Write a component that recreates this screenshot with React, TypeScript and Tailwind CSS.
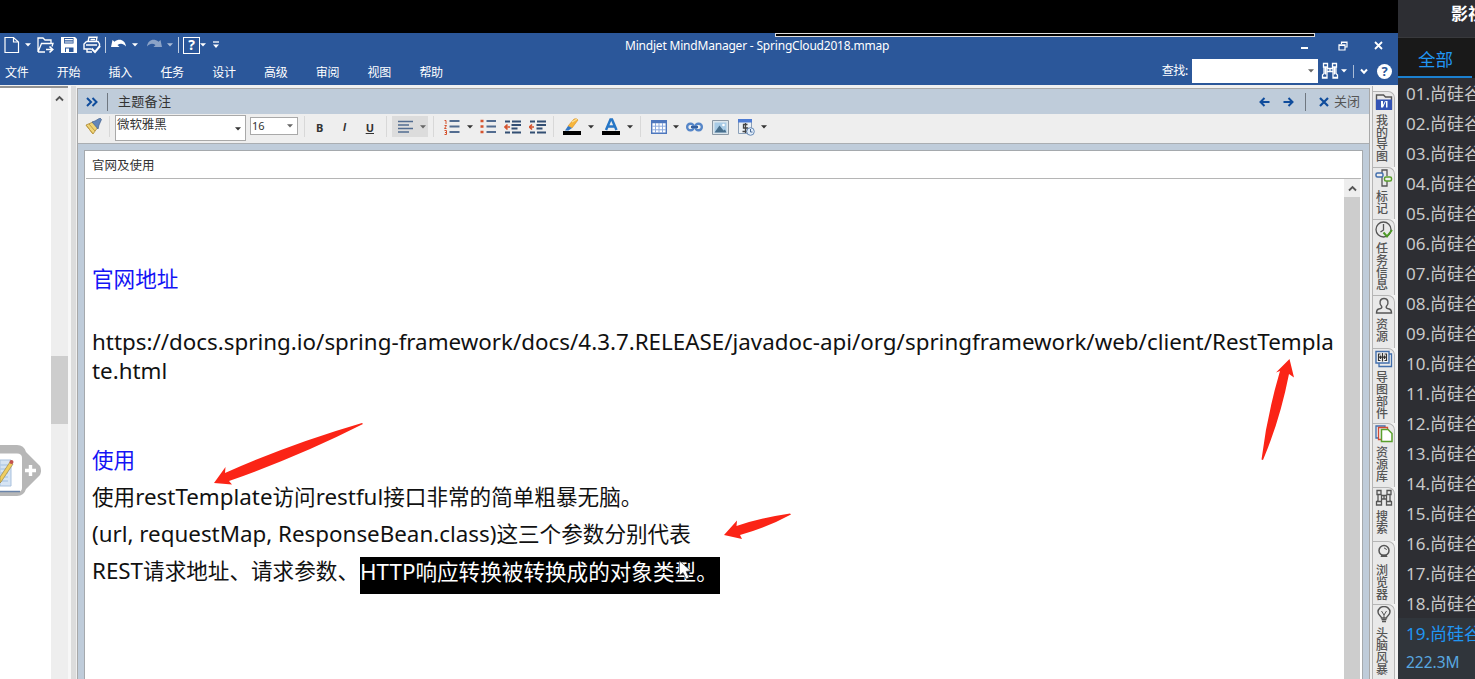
import type { ReactNode } from "react";

const uiFont = "font-['Noto_Sans','Noto_Sans_CJK_SC',sans-serif]";

function Caret({ className = "text-[#666]" }: { className?: string }) {
  return (
    <svg className={`shrink-0 ${className}`} width="6" height="4" viewBox="0 0 6 4">
      <path d="M0 0.3H6L3 3.6Z" fill="currentColor" />
    </svg>
  );
}

function Icon({ w = 18, h = 18, className = "", children }: { w?: number; h?: number; className?: string; children: ReactNode }) {
  return (
    <svg className={`shrink-0 ${className}`} width={w} height={h} viewBox={`0 0 ${w} ${h}`} fill="none">
      {children}
    </svg>
  );
}

function Binoculars({ className = "" }: { className?: string }) {
  return (
    <Icon w={18} h={18} className={className}>
      <path
        d="M2.500 1.500h4v3.500h-4zM11.500 1.500h4v3.500h-4zM3 5v6.500L1.500 13v3h4.500V5M15 5v6.500l1.500 1.500v3H12V5M1 15.500h5M12 15.500h5M6 6.500h6M6 9.500h6M9 6.500v3M4.500 5.500v7M13.500 5.500v7"
        stroke="currentColor"
        strokeWidth="1.3"
      />
    </Icon>
  );
}

function TitleBar() {
  return (
    <div className="flex h-[25px] items-center text-white">
      <div className="flex h-full w-[240px] shrink-0 items-center pb-px pl-[4px]">
        <Icon w={16} h={18}>
          <path d="M1 1.500h8.500L14.500 6v10.500H1zM9.500 1.500V6h5" stroke="white" strokeWidth="1.200" />
        </Icon>
        <Caret className="ml-[5px] text-white" />
        <Icon w={18} h={18} className="ml-[6px]">
          <path d="M1 16V2h5l2 2h6v3M1 16L4.500 7.500H16l-1 3M1 16h7" stroke="white" strokeWidth="1.300" />
          <path d="M9 13.500h6.500M12.500 10.500l3.200 3-3.200 3" stroke="white" strokeWidth="1.700" />
        </Icon>
        <Icon w={18} h={18} className="ml-[5px]">
          <path d="M1 1h14l2 2v14H1z" fill="white" />
          <path d="M4 2h9.500v5.500H4zM5 11.500h8.500V16H5z" fill="#2b579a" />
          <path d="M4.800 3h8v1.200h-8zM4.800 5.500h8v1h-8zM6 12.500h3V16H6z" fill="white" />
        </Icon>
        <Icon w={18} h={18} className="ml-[5px]">
          <path d="M5 6L6 1.200h8L13 6M3.500 5.500H15l1.500 2.500v3M3.500 5.500L1 8v5h7M3 9h11M4 13v3h5M7.500 3.500H12" stroke="white" strokeWidth="1.400" />
          <path d="M8.500 12.500l3.500 3.500 5-6" stroke="white" strokeWidth="2" />
        </Icon>
        <div className="ml-[4px] h-[16px] w-px bg-white/70" />
        <Icon w={16} h={12} className="ml-[5px]">
          <path d="M0 8L1.500 1l2 1.800C8-.8 14 .5 15 7.500 12 4 9 4.300 6.500 6L8.500 8z" fill="white" />
        </Icon>
        <Caret className="ml-[5px] text-white" />
        <Icon w={16} h={12} className="ml-[8px] opacity-45">
          <path d="M16 8L14.500 1l-2 1.800C8-.8 2 .5 1 7.500 4 4 7 4.300 9.500 6L7.500 8z" fill="white" />
        </Icon>
        <Caret className="ml-[5px] text-white/60" />
        <div className="ml-[5px] h-[16px] w-px bg-white/70" />
        <div className="ml-[4px] flex h-[17px] w-[17px] shrink-0 items-center justify-center border border-white text-[14px] leading-none font-bold">?</div>
        <Caret className="text-white" />
        <Icon w={6} h={8} className="ml-[7px]">
          <path d="M0 1h6" stroke="white" strokeWidth="1.300" />
          <path d="M0 3.500h6L3 7z" fill="white" />
        </Icon>
      </div>
      <div className="flex-1 pl-[385px] text-[12px] tracking-[-0.2px] whitespace-nowrap">Mindjet MindManager - SpringCloud2018.mmap</div>
      <div className="flex shrink-0 items-center pr-[15px]">
        <div className="mt-[5px] h-[2px] w-[7px] bg-white" />
        <Icon w={10} h={10} className="ml-[30px]">
          <path d="M3.500 3V1H9v5H7M1 3.800h6V9H1zM1 4.500h6M3.500 1.500H9" stroke="white" strokeWidth="1.200" />
        </Icon>
        <Icon w={9} h={9} className="ml-[26px]">
          <path d="M1 1l7 7M8 1L1 8" stroke="white" strokeWidth="1.800" />
        </Icon>
      </div>
    </div>
  );
}

function MenuBar() {
  const items = ["文件", "开始", "插入", "任务", "设计", "高级", "审阅", "视图", "帮助"];
  return (
    <div className="flex h-[26px] items-center text-[12px] tracking-[-0.3px] text-white">
      <div className="flex pt-[3px] pl-[5px]">
        {items.map((t) => (
          <div key={t} className="w-[51.8px] leading-[26px]">{t}</div>
        ))}
      </div>
      <div className="ml-auto flex items-center">
        <span className="mr-[4px]">查找:</span>
        <div className="flex h-[24px] w-[126px] items-center justify-end bg-white pr-[4px]"><Caret /></div>
        <Binoculars className="ml-[3px]" />
        <Caret className="ml-[2px] text-white" />
        <div className="ml-[6px] h-[13px] w-px bg-white/60" />
        <Icon w={8} h={7} className="ml-[6px]"><path d="M1 1.500l3 3.200 3-3.200" stroke="white" strokeWidth="2" /></Icon>
        <div className="mr-[6px] ml-[9px] flex h-[15px] w-[15px] items-center justify-center rounded-full bg-white text-[13px] leading-none font-bold text-[#2b579a]">?</div>
      </div>
    </div>
  );
}

function MapCanvas() {
  return (
    <div className="flex w-[77px] shrink-0">
      <div className="flex w-[51px] flex-col border-t-2 border-[#929292] bg-white">
        <div className="mt-[357px] flex h-[52px] items-center">
          <svg width="42" height="52" viewBox="0 0 42 52" className="shrink-0">
            <path d="M0 0H17Q24 0 26 7L40 21Q42 25.500 40 30L26 44Q24 51 17 51H0z" fill="#b7b7b7" />
            <path d="M0 8.500H17Q22 8.500 22 13V43Q22 47 17 47H0z" fill="white" />
            <path d="M0 46.500h20" stroke="#6a84aa" strokeWidth="1.500" />
            <path d="M0 15h11v26H0z" fill="#d6e4f3" stroke="#a9c1dd" />
            <path d="M0 20h8M0 24h8M0 28h8M0 32h8M0 36h8" stroke="#b4cce8" strokeWidth="1.600" />
            <path d="M0 32L10 17l3 2L1 37l-1 1z" fill="#f0ce60" stroke="#9b8644" strokeWidth=".7" />
            <circle cx="11.500" cy="17" r="2" fill="#c3524e" />
            <path d="M25 25.500h11M30.500 20v11" stroke="white" strokeWidth="3.400" />
          </svg>
        </div>
      </div>
      <div className="flex w-[17px] flex-col border-t-2 border-[#929292] bg-[#eeeeee]">
        <Icon w={9} h={7} className="mt-[7px] ml-[4px]"><path d="M1 5.500L4.500 2 8 5.500" stroke="#555" strokeWidth="1.800" /></Icon>
        <div className="mt-[254px] h-[68px] bg-[#cdcdcd]" />
      </div>
      <div className="w-[3px] bg-[#f7f7f7]" />
      <div className="w-[5px] bg-[#dcdcdc]" />
      <div className="w-px bg-[#f0f0f0]" />
    </div>
  );
}

function NotesHeader() {
  return (
    <div className="flex h-[25px] shrink-0 items-center bg-[#bfccda] text-[12px] text-[#333]">
      <Icon w={12} h={10} className="ml-[8px]"><path d="M1 1l4 4-4 4M6.500 1l4 4-4 4" stroke="#0f4c9c" strokeWidth="2" /></Icon>
      <div className="ml-[9px] h-[18px] w-px bg-[#6f7780]" />
      <div className="ml-[10px] text-[13px] tracking-[0.3px]">主题备注</div>
      <div className="ml-auto flex items-center pr-[9px]">
        <Icon w={11} h={10}><path d="M10.500 5H1.500M5.500 1L1.500 5l4 4" stroke="#0f4c9c" strokeWidth="2" /></Icon>
        <Icon w={11} h={10} className="ml-[13px]"><path d="M.5 5h9M5.500 1l4 4-4 4" stroke="#0f4c9c" strokeWidth="2" /></Icon>
        <div className="ml-[11px] h-[18px] w-px bg-[#6f7780]" />
        <Icon w={10} h={10} className="ml-[13px]"><path d="M1 1l8 8M9 1L1 9" stroke="#0f4c9c" strokeWidth="2.200" /></Icon>
        <div className="ml-[5px] text-[13px] text-[#555]">关闭</div>
      </div>
    </div>
  );
}

function Sep({ className = "" }: { className?: string }) {
  return <div className={`h-[21px] w-px shrink-0 bg-[#d8d8d8] ${className}`} />;
}

function Indent({ out = false }: { out?: boolean }) {
  return (
    <Icon w={17} h={15}>
      <path d="M1 1.500h5M8 1.500h9M7.500 5h9.500M7.500 8.500h6M1 12.500h5M8 12.500h9" stroke="#334f73" strokeWidth="2" />
      {out ? <path d="M6 7H1M3.500 4.500L1 7l2.500 2.500" stroke="#d5532e" strokeWidth="1.700" /> : <path d="M0 7h5M3 4.500L.5 7 3 9.500" stroke="#d5532e" strokeWidth="1.700" />}
    </Icon>
  );
}

function FormatToolbar() {
  return (
    <div className="flex h-[30px] shrink-0 items-start border-b border-[#aaaeb2] bg-[#eeeeee] text-[#333]">
      <Icon w={17} h={17} className="mt-[4px] ml-[7px]">
        <path d="M1 7L8 4l5 5-5 7z" fill="#efd477" stroke="#a9883c" strokeWidth=".8" />
        <path d="M1 7l7 9M4 6l6 7" stroke="#c29c3d" />
        <path d="M7 4l3-1 5-3 1.500 1.500L14 7l-1 4z" fill="#6386b8" stroke="#45638e" strokeWidth=".7" />
      </Icon>
      <Sep className="mt-[2px] ml-[7px]" />
      <div className="mt-px ml-[5px] flex h-[26px] w-[131px] justify-between border border-[#a9a9a9] bg-white pr-[4px] pl-[1px]">
        <span className="text-[12.500px] leading-[17px] tracking-[-0.1px]">微软雅黑</span>
        <Caret className="mt-[11px]" />
      </div>
      <div className="mt-[3px] ml-[4px] flex h-[18px] w-[48px] items-center justify-between border border-[#a9a9a9] bg-white pr-[4px] pl-[1px] text-[11px] leading-[16px]">
        16<Caret />
      </div>
      <Sep className="mt-[2px] ml-[6px]" />
      <div className="mt-[3px] ml-[11px] flex h-[21px] w-[58px] items-center justify-between text-[11px] leading-none font-bold">
        <span>B</span><span className="font-['Liberation_Sans',sans-serif] italic">I</span><span className="underline">U</span>
      </div>
      <Sep className="mt-[2px] ml-[12px]" />
      <div className="mt-[2px] ml-[5px] flex h-[21px] w-[36px] items-center justify-between bg-[#dcdcdc] pr-[2px] pl-[6px]">
        <Icon w={16} h={13}><path d="M0 1.500h15M0 5h11M0 8.500h15M0 12h11" stroke="#526c90" strokeWidth="1.600" /></Icon>
        <Caret />
      </div>
      <Sep className="mt-[2px] ml-[5px]" />
      <div className="mt-[4px] ml-[10px] flex h-[18px] items-center">
        <Icon w={16} h={16}>
          <path d="M5.500 2h10M5.500 7.500h10M5.500 13h10" stroke="#526c90" strokeWidth="1.800" />
          <path d="M.5 1.500h1.500V5M.5 6.500h2L.5 9.500h2M.5 11.500h2v4h-2M1 13.500h1.500" stroke="#d5532e" />
        </Icon>
        <Caret className="ml-[7px]" />
        <Icon w={17} h={16} className="ml-[7px]">
          <path d="M6.500 2H16M6.500 7.500H16M6.500 13H16" stroke="#526c90" strokeWidth="1.800" />
          <path d="M.5 .8h3v2.500h-3zM.5 6.200h3v2.500h-3zM.5 11.800h3v2.500h-3z" fill="#d5532e" />
        </Icon>
        <div className="ml-[7px] flex gap-[8px]"><Indent out /><Indent /></div>
      </div>
      <Sep className="mt-[2px] ml-[7px]" />
      <div className="mt-[3px] ml-[9px] flex h-[19px] items-center">
        <Icon w={18} h={18}>
          <path d="M5 8l6-7q3-1 4 1L9 10z" fill="#f7b63b" stroke="#d68d22" strokeWidth=".6" />
          <path d="M2 12.500L5 8l4 2-3.500 2.500z" fill="#3477c3" />
          <path d="M9 4l5-3" stroke="#fce095" strokeWidth="1.300" />
          <path d="M0 13h18v4H0z" fill="#000" />
        </Icon>
        <Caret className="ml-[7px]" />
        <Icon w={18} h={18} className="ml-[8px]">
          <path d="M4 12L8.500 1.500h1.500L14.500 12M6 8.500h7" stroke="#2676c6" strokeWidth="2.500" />
          <path d="M0 13h18v4H0z" fill="#000" />
        </Icon>
        <Caret className="ml-[7px]" />
      </div>
      <Sep className="mt-[2px] ml-[7px]" />
      <div className="mt-[4px] ml-[10px] flex h-[18px] items-center">
        <Icon w={16} h={14}>
          <path d="M.7.7h14.600v12.600H.7z" fill="white" stroke="#4d77bd" strokeWidth="1.400" />
          <path d="M1 2h14" stroke="#4d77bd" strokeWidth="2.500" />
          <path d="M1 6.200h14M1 9.800h14M4.500 3v10M8 3v10M11.500 3v10" stroke="#8eabde" />
        </Icon>
        <Caret className="ml-[6px]" />
        <Icon w={17} h={10} className="ml-[7px]">
          <rect x="1.200" y="1.700" width="6.500" height="6.500" rx="3" stroke="#5686c8" strokeWidth="2.400" />
          <rect x="9.300" y="1.700" width="6.500" height="6.500" rx="3" stroke="#5686c8" strokeWidth="2.400" />
          <path d="M5 5h7" stroke="#355f9e" strokeWidth="2" />
        </Icon>
        <Icon w={17} h={15} className="ml-[9px]">
          <path d="M.5.5h16v14H.5z" fill="#dce6ec" stroke="#8b98a5" />
          <path d="M2.500 2.500h12v10h-12z" fill="#a8cbe6" />
          <path d="M2.500 12.500l5-7 4 5 1.500-1 1.500 3z" fill="#486f8d" />
          <circle cx="11.500" cy="5" r="1.300" fill="white" />
        </Icon>
        <Icon w={17} h={17} className="ml-[9px]">
          <path d="M.5.5h13v14H.5z" fill="#edf1f5" stroke="#8ba0b9" />
          <path d="M0 0h14v3.500H0z" fill="#4d7bd3" />
          <path d="M9.500 5.500H5.500v3.500h4v3.500h-5M7.500 4v10" stroke="#444" strokeWidth="1.300" />
          <circle cx="12.500" cy="12.500" r="3.800" fill="#e2edf9" stroke="#6688b5" />
          <path d="M12.500 10v3h2" stroke="#486b99" />
        </Icon>
        <Caret className="ml-[6px]" />
      </div>
    </div>
  );
}

function Latin({ children }: { children: ReactNode }) {
  return <span className="text-[22.36px]">{children}</span>;
}

function NoteBody() {
  return (
    <div className="flex min-h-0 flex-1">
      <div className="flex-1 pl-[7px] text-[21.600px] whitespace-nowrap text-[#111]">
        <div className="mt-[85px] h-[30px] leading-[30px] text-[#1414f5]">官网地址</div>
        <div className="mt-[33px] h-[29px] leading-[29px]"><Latin>https://docs.spring.io/spring-framework/docs/4.3.7.RELEASE/javadoc-api/org/springframework/web/client/RestTempla</Latin></div>
        <div className="h-[29px] leading-[29px]"><Latin>te.html</Latin></div>
        <div className="mt-[56px] h-[37px] leading-[37px] text-[#1414f5]">使用</div>
        <div className="h-[37px] leading-[37px]">使用<Latin>restTemplate</Latin>访问<Latin>restful</Latin>接口非常的简单粗暴无脑。</div>
        <div className="h-[37px] leading-[37px]"><Latin>(url, requestMap, ResponseBean.class)</Latin>这三个参数分别代表</div>
        <div className="flex h-[42px] leading-[38px]">
          <span className="w-[268px]"><Latin>REST</Latin>请求地址、请求参数、</span>
          <span className="mt-[5px] h-[37px] w-[360px] bg-black leading-[29px] text-white"><Latin>HTTP</Latin>响应转换被转换成的对象类型。</span>
        </div>
      </div>
      <div className="mr-[2px] flex w-[16px] flex-col bg-[#cdcdcd]">
        <div className="flex h-[18px] items-center justify-center bg-[#eeeeee]">
          <Icon w={9} h={7}><path d="M1 5.500L4.500 2 8 5.500" stroke="#555" strokeWidth="1.800" /></Icon>
        </div>
      </div>
    </div>
  );
}

const g = "#555555";
const tabs: { label: string; box: string; text: string; icon: ReactNode }[] = [
  { label: "我的导图", box: "h-[76px]", text: "h-[48px]", icon: <><path d="M1.500 16V2h7l2 2h6v12z" stroke={g} strokeWidth="1.400" /><path d="M1 6.500h16V17H1z" fill="#3453b4" /><path d="M6 8v6.500h2L11 8v6.500h1.500V8H10l-2 4V8z" fill="white" /></> },
  { label: "标记", box: "h-[52px]", text: "h-[24px]", icon: <><path d="M7 4.500V1h5v6M7 8v9h5v-5" stroke={g} strokeWidth="1.300" /><rect x="1" y="4" width="7" height="4" rx="1.500" fill="#eee" stroke="#416eac" strokeWidth="1.500" /><rect x="9.500" y="8" width="7" height="4" rx="1.500" fill="#eee" stroke="#5aa02c" strokeWidth="1.500" /></> },
  { label: "任务信息", box: "h-[76px]", text: "h-[48px]", icon: <><circle cx="8.500" cy="8.500" r="7.500" stroke={g} strokeWidth="1.300" /><path d="M8.500 3v6l-3 2" stroke={g} strokeWidth="1.300" /><path d="M8.500 11.500l3.500 4L17 9" stroke="#4c9a25" strokeWidth="2" /></> },
  { label: "资源", box: "h-[53px]", text: "h-[24px]", icon: <path d="M6.700 9.500C3.500 6 5 1.500 9 1.500s5.500 4.500 2.300 8c-.6 1.500.7 2 3 2.500 2 .5 2.200 2 2.200 4h-15c0-2 .2-3.500 2.200-4 2.300-.5 3.600-1 3-2.500z" stroke={g} strokeWidth="1.400" /> },
  { label: "导图部件", box: "h-[75px]", text: "h-[48px]", icon: <><path d="M4 13v3.500h12.500V4H14" stroke="#416eac" strokeWidth="1.300" /><path d="M1 1.500h13V13H1z" fill="#f5f5f5" stroke="#416eac" strokeWidth="1.400" /><path d="M5.500 4H3.500v6.500h2M9.500 4h2v6.500h-2M3.500 7.200h8M5.500 5.500v3.500M9.500 5.500v3.500M7.500 3v8.500" stroke="#333" strokeWidth="1.200" /></> },
  { label: "资源库", box: "h-[64px]", text: "h-[36px]", icon: <><path d="M1 1h9v12H1z" fill="#eee" stroke="#416eac" strokeWidth="1.300" /><path d="M3.500 2.500h9v12h-9z" fill="#eee" stroke="#d34b35" strokeWidth="1.300" /><path d="M6.500 4.500h6.500l4 4v8H6.500z" fill="white" stroke="#5aa02c" strokeWidth="1.500" /></> },
  { label: "搜索", box: "h-[54px]", text: "h-[24px]", icon: <path d="M2 1.500h4v4H2zM12 1.500h4v4h-4zM3 5.500v6l-1.500 1V16h5V5.500M15 5.500v6l1.500 1V16h-5V5.500M1.500 12.500h5M11.500 12.500h5M6.500 6.500h5M6.500 10h5M9 6.500V10" stroke={g} strokeWidth="1.300" /> },
  { label: "浏览器", box: "h-[63px]", text: "h-[36px]", icon: <><circle cx="9" cy="7.500" r="5" stroke={g} strokeWidth="1.500" /><path d="M9 5q2 0 2.500 2" stroke={g} /><path d="M6.500 11.500h5l1 2.500h-7z" fill={g} /></> },
  { label: "头脑风暴", box: "h-[76px]", text: "h-[48px]", icon: <><path d="M6.500 12C6.500 10 3 9 3 6a6 5.500 0 0112 0c0 3-3.500 4-3.500 6z" stroke={g} strokeWidth="1.400" /><path d="M6.500 5L9 9l2.500-4M9 9v3" stroke={g} /><path d="M6.500 13.500h5M7 15.500h4" stroke={g} strokeWidth="1.500" /></> },
];

function SideTabs() {
  return (
    <div className="ml-[2px] flex w-[26px] shrink-0 flex-col border-l border-[#b5b5b5] bg-[#f2f2f2] pt-[5px]">
      {tabs.map((t) => (
        <div key={t.label} className={`flex w-[22px] shrink-0 flex-col items-center rounded-tr-[7px] border-t border-r border-[#b5b5b5] bg-[#e9e9e9] pt-px ${t.box}`}>
          <Icon>{t.icon}</Icon>
          <div className={`mt-[4px] mr-[3px] flex w-[12px] flex-col text-[12px] leading-[12px] font-medium text-[#555] ${t.text}`}>
            {t.label.split("").map((c) => <span key={c}>{c}</span>)}
          </div>
        </div>
      ))}
    </div>
  );
}

function Playlist() {
  const rows = Array.from({ length: 18 }, (_, i) => String(i + 1).padStart(2, "0"));
  return (
    <div className="flex w-[77px] shrink-0 flex-col overflow-hidden bg-[#2d2e33] whitespace-nowrap text-[#c9c9c9]">
      <div className="h-[38px] shrink-0 border-b border-[#38393c] pl-[53px] text-[17px] leading-[27px] font-bold text-white">影视</div>
      <div className="flex h-[40px] shrink-0 bg-[#191919]">
        <div className="w-[74px] border-b-2 border-[#1b80cf] pl-[20px] text-[17.500px] leading-[42px] text-[#2196f3]">全部</div>
      </div>
      <div className="flex flex-col text-[17px]">
        {rows.map((n) => <div key={n} className="h-[30px] pl-[8px] leading-[31px]">{n}.尚硅谷</div>)}
      </div>
      <div className="flex-1 bg-[#30353b] pl-[8px] text-[#2196f3]">
        <div className="h-[30px] text-[17px] leading-[31px]">19.尚硅谷</div>
        <div className="text-[15.500px] leading-[28px] text-[#58a8e0]">222.3M</div>
      </div>
    </div>
  );
}

function Annotations() {
  return (
    <svg className="pointer-events-none absolute inset-0" width="1475" height="679" viewBox="0 0 1475 679">
      <g fill="#fb2416">
        <path d="M214 483L225.500 467 225 473Q290 444 362 423L363 424Q300 456 229 481L232 484.500Z" />
        <path d="M724 535L737 520.500 736.500 526Q760 518 790 513.500L791 514.500Q766 528 740 535L742 539Z" />
        <path d="M1289.500 359L1294 377.500 1289 374Q1280 420 1263 460L1261.500 459.500Q1267 415 1280 371L1276 372.500Z" />
      </g>
      <path d="M679.500 561v14.500l3.600-3 2.900 6.500 3-1.300-2.800-6.300 4.800-.5z" fill="white" stroke="#333" strokeWidth=".7" />
    </svg>
  );
}

export default function App() {
  return (
    <div className={`relative flex h-[679px] w-[1475px] overflow-hidden bg-[#2d2e33] ${uiFont}`}>
      <div className="flex w-[1398px] shrink-0 flex-col bg-black">
        <div className="h-[33px] shrink-0" />
        <div className="relative h-[52px] shrink-0 bg-[#2b579a]">
          <TitleBar />
          <MenuBar />
          <div className="absolute top-0 left-[775px] h-[4px] w-[540px] border border-[#ddd] bg-black" />
        </div>
        <div className="flex min-h-0 flex-1 bg-[#f0f0f0] pt-px">
          <MapCanvas />
          <div className="mt-[2px] flex w-[1293px] shrink-0 flex-col border-x border-t border-[#a8a8a8] bg-[#bfccda]">
            <NotesHeader />
            <FormatToolbar />
            <div className="mt-[6px] mr-[6px] ml-[6px] flex min-h-0 flex-1 flex-col border-x border-t border-[#a5a9ad] bg-white">
              <div className="mx-px h-[28px] shrink-0 border-b border-[#b5b5b5] pl-[6px] text-[12.500px] leading-[29px] text-[#333]">官网及使用</div>
              <NoteBody />
            </div>
          </div>
          <SideTabs />
        </div>
      </div>
      <Playlist />
      <Annotations />
    </div>
  );
}
